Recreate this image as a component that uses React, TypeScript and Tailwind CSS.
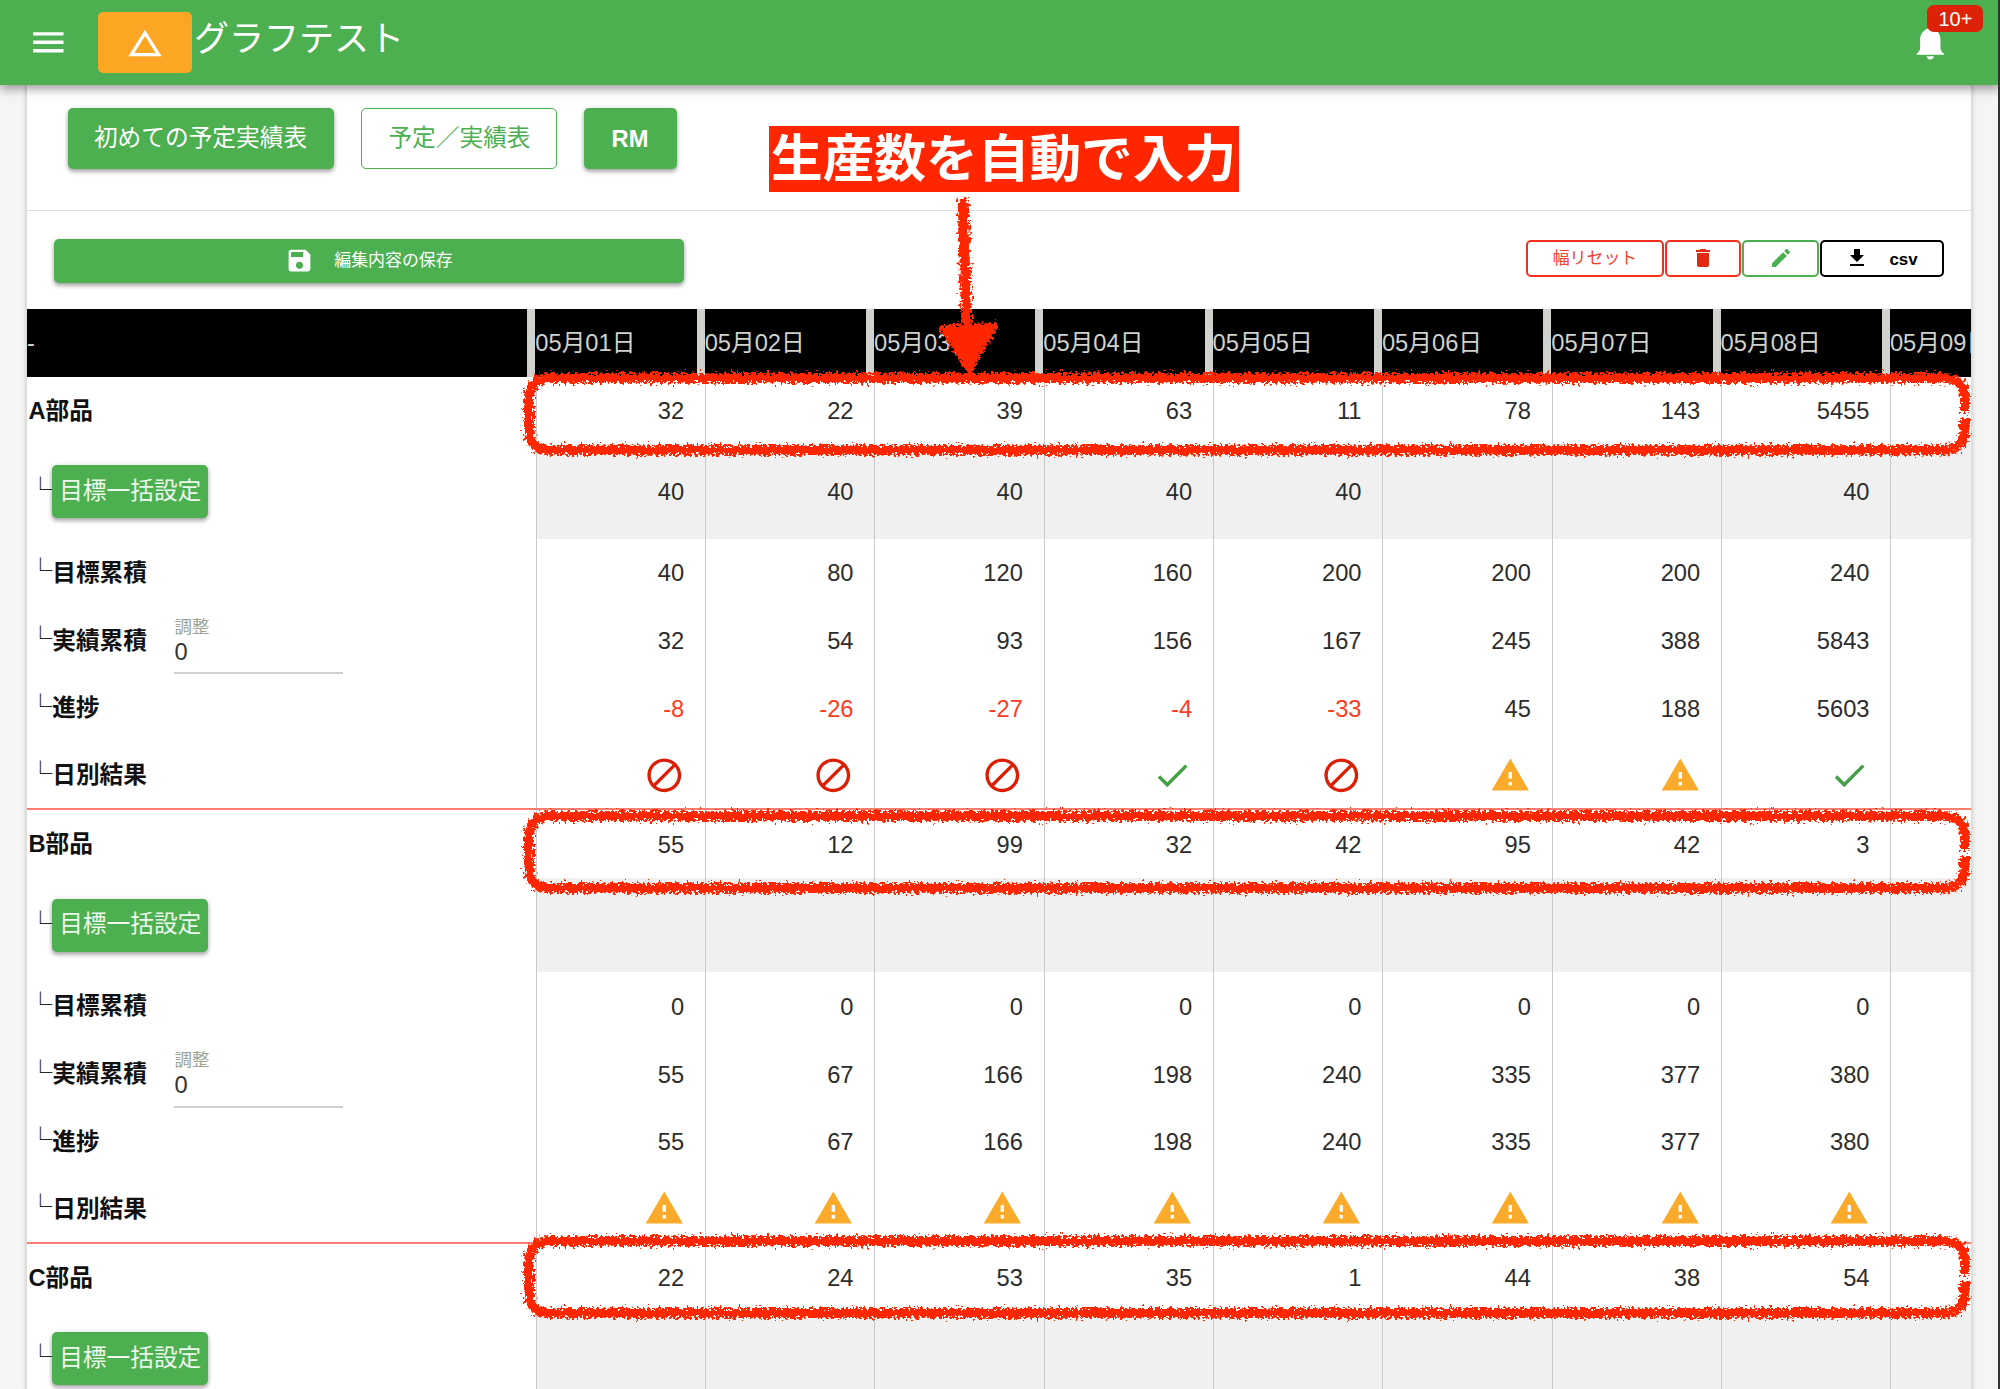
import React from "react";

const MENU = "M3 18h18v-2H3v2zm0-5h18v-2H3v2zm0-7v2h18V6H3z";
const TRIANGLE = "M12 7.77L18.39 18H5.61L12 7.77M12 4L2 20h20L12 4z";
const SAVE =
  "M17 3H5c-1.11 0-2 .9-2 2v14c0 1.1.89 2 2 2h14c1.1 0 2-.9 2-2V7l-4-4zm-5 16c-1.66 0-3-1.34-3-3s1.34-3 3-3 3 1.34 3 3-1.34 3-3 3zm3-10H5V5h10v4z";
const TRASH = "M6 19c0 1.1.9 2 2 2h8c1.1 0 2-.9 2-2V7H6v12zM19 4h-3.5l-1-1h-5l-1 1H5v2h14V4z";
const PENCIL =
  "M3 17.25V21h3.75L17.81 9.94l-3.75-3.75L3 17.25zM20.71 7.04c.39-.39.39-1.02 0-1.41l-2.34-2.34c-.39-.39-1.02-.39-1.41 0l-1.83 1.83 3.75 3.75 1.83-1.83z";
const DOWNLOAD = "M19 9h-4V3H9v6H5l7 7 7-7zM5 18v2h14v-2H5z";
const BAN =
  "M12 2C6.5 2 2 6.5 2 12s4.5 10 10 10 10-4.5 10-10S17.5 2 12 2zM4 12c0-4.4 3.6-8 8-8 1.8 0 3.5.6 4.9 1.7L5.7 16.9C4.6 15.5 4 13.8 4 12zm8 8c-1.8 0-3.5-.6-4.9-1.7L18.3 7.1C19.4 8.5 20 10.2 20 12c0 4.4-3.6 8-8 8z";
const CHECK = "M9 16.17L4.83 12l-1.42 1.41L9 19 21 7l-1.41-1.41z";
const WARN = "M1 21h22L12 2 1 21zm12-3h-2v-2h2v2zm0-4h-2v-4h2v4z";
const BELL =
  "M12 3.6C8.4 4.2 6 6.8 6 10.4V15.4C6 16.8 5.2 17.8 3.9 18.7V19.4H20.1V18.7C18.8 17.8 18 16.8 18 15.4V10.4C18 6.8 15.6 4.2 12 3.6ZM9.9 20.2H14.1C14.1 21.4 13.2 22.1 12 22.1S9.9 21.4 9.9 20.2Z";

function Icon({ d, className }: { d: string; className: string }) {
  return (
    <svg viewBox="0 0 24 24" fill="currentColor" className={className}>
      <path d={d} />
    </svg>
  );
}

type Mark = "ban" | "check" | "warn";

interface Part {
  name: string;
  made: string[];
  target: string[];
  targetSum: string[];
  madeSum: string[];
  progress: string[];
  result: Mark[];
}

const DAYS = ["05月01日", "05月02日", "05月03日", "05月04日", "05月05日", "05月06日", "05月07日", "05月08日", "05月09日"];

const PARTS: Part[] = [
  {
    name: "A部品",
    made: ["32", "22", "39", "63", "11", "78", "143", "5455"],
    target: ["40", "40", "40", "40", "40", "", "", "40"],
    targetSum: ["40", "80", "120", "160", "200", "200", "200", "240"],
    madeSum: ["32", "54", "93", "156", "167", "245", "388", "5843"],
    progress: ["-8", "-26", "-27", "-4", "-33", "45", "188", "5603"],
    result: ["ban", "ban", "ban", "check", "ban", "warn", "warn", "check"],
  },
  {
    name: "B部品",
    made: ["55", "12", "99", "32", "42", "95", "42", "3"],
    target: [],
    targetSum: ["0", "0", "0", "0", "0", "0", "0", "0"],
    madeSum: ["55", "67", "166", "198", "240", "335", "377", "380"],
    progress: ["55", "67", "166", "198", "240", "335", "377", "380"],
    result: ["warn", "warn", "warn", "warn", "warn", "warn", "warn", "warn"],
  },
  {
    name: "C部品",
    made: ["22", "24", "53", "35", "1", "44", "38", "54"],
    target: [],
    targetSum: [],
    madeSum: [],
    progress: [],
    result: [],
  },
];

function ResultMark({ mark }: { mark: Mark }) {
  if (mark === "ban") return <Icon d={BAN} className="size-[40.6px] text-[#dc1f04]" />;
  if (mark === "check") return <Icon d={CHECK} className="size-[40.6px] text-[#43a047]" />;
  return <Icon d={WARN} className="size-[40.6px] text-[#fbab2b]" />;
}

function Row({
  label,
  cells,
  height = "h-[67.73px]",
  shade = "",
  nudge = "pt-[3px]",
}: {
  label: React.ReactNode;
  cells: React.ReactNode[];
  height?: string;
  shade?: string;
  nudge?: string;
}) {
  return (
    <div className={"flex shrink-0 " + height}>
      <div className="flex w-[508.67px] shrink-0 items-center pt-[2px] pl-[1.5px] font-bold text-[#111]">{label}</div>
      {DAYS.map((day, i) => {
        const cell = cells[i] ?? "";
        const negative = typeof cell === "string" && cell.startsWith("-");
        return (
          <div
            key={day}
            className={
              "flex w-[169.33px] shrink-0 items-center justify-end border-l border-[#c8c8c8] pr-[20.8px] " +
              (negative ? "text-[#ff3b22] " : "text-[#2c2c2c] ") +
              nudge +
              " " +
              shade
            }
          >
            {cell}
          </div>
        );
      })}
    </div>
  );
}

function Branch() {
  return <span className="mb-[7px] font-['Noto_Sans_CJK_JP',sans-serif] font-medium text-[#222]">└</span>;
}

function PartRows({ part }: { part: Part }) {
  return (
    <section className="flex shrink-0 flex-col">
      <Row label={part.name} cells={part.made} />
      <Row
        height="h-[94.6px]"
        shade="bg-[#f0f0f0]"
        cells={part.target}
        label={
          <>
            <Branch />
            <button className="-mt-[2px] h-[53px] w-[156px] rounded-[5px] bg-[#4caf50] font-normal text-white/90 shadow-[0_3px_4px_rgba(0,0,0,0.3),0_0_5px_rgba(0,0,0,0.12)]">
              目標一括設定
            </button>
          </>
        }
      />
      <Row label={<><Branch />目標累積</>} cells={part.targetSum} />
      <Row
        cells={part.madeSum}
        label={
          <>
            <Branch />
            実績累積
            <div className="-mt-[2px] ml-[27.5px] flex h-[67.73px] w-[169px] flex-col border-b-2 border-[#cfcfcf] pt-[10px] font-normal">
              <span className="text-[17.5px] leading-[20px] text-[#9ba598]">調整</span>
              <span className="leading-[30px] text-[#333]">0</span>
            </div>
          </>
        }
      />
      <Row label={<><Branch />進捗</>} cells={part.progress} />
      <div className="border-b-2 border-[#ff7d6e]">
        <Row
          height="h-[66.1px]"
          nudge="pt-0"
          label={<><Branch />日別結果</>}
          cells={part.result.map((mark, i) => (
            <ResultMark key={i} mark={mark} />
          ))}
        />
      </div>
    </section>
  );
}

/* Hand-drawn crayon outline around one row of numbers. */
function CrayonFrame({ top }: { top: string }) {
  return (
    <svg
      width="1460"
      height="96"
      viewBox="0 0 1460 96"
      fill="none"
      stroke="#ff2600"
      className={"pointer-events-none absolute left-[517px] " + top}
    >
      <path
        filter="url(#crayon)"
        strokeWidth="10"
        d="M1448 46V34Q1448 12 1426 12H32Q12 12 12 34V62Q12 84 32 84H1426Q1448 84 1448 62V52"
      />
    </svg>
  );
}

export default function App() {
  return (
    <div className="relative flex h-[1389px] w-[2000px] flex-col overflow-hidden bg-[#f5f5f4] font-['Liberation_Sans','Noto_Sans_CJK_JP',sans-serif] text-[23.7px] leading-none">
      <svg width="0" height="0" className="absolute">
        <filter id="crayon" filterUnits="userSpaceOnUse" x="0" y="0" width="1460" height="200">
          <feTurbulence type="fractalNoise" baseFrequency="0.36" numOctaves="2" seed="4" result="noise" />
          <feDisplacementMap in="SourceGraphic" in2="noise" scale="12" xChannelSelector="R" yChannelSelector="G" />
        </filter>
      </svg>

      <header className="relative z-10 flex h-[85px] shrink-0 items-center bg-[#4caf50] pl-[28px] text-white shadow-[0_4px_8px_rgba(0,0,0,0.28),0_6px_12px_rgba(0,0,0,0.1)]">
        <Icon d={MENU} className="size-[40.6px]" />
        <div className="ml-[29px] flex h-[61px] w-[94px] items-center justify-center rounded-[5px] bg-[#fda623]">
          <Icon d={TRIANGLE} className="size-[40px]" />
        </div>
        <h1 className="mb-[8px] ml-[2.5px] text-[35px] font-normal">グラフテスト</h1>
        <div className="relative mr-[49px] ml-auto">
          <Icon d={BELL} className="size-[40.6px]" />
          <span className="absolute -top-[17px] left-[17px] flex h-[27px] w-[56px] items-center justify-center rounded-[7px] bg-[#dc2309] pt-px text-[20px]">
            10+
          </span>
        </div>
      </header>

      <main className="ml-[27px] flex w-[1944px] flex-1 flex-col overflow-hidden bg-white shadow-[0_0_4px_2px_rgba(0,0,0,0.14)]">
        <nav className="flex h-[126px] shrink-0 gap-[27px] border-b-[1.5px] border-[#e0e0e0] pt-[23px] pl-[40.5px]">
          <button className="h-[61px] w-[266px] rounded-[5px] bg-[#4caf50] pt-px text-white shadow-[0_3px_4px_rgba(0,0,0,0.3),0_0_5px_rgba(0,0,0,0.12)]">
            初めての予定実績表
          </button>
          <button className="h-[61px] w-[196px] rounded-[5px] border-[1.7px] border-[#4caf50] pt-px pl-[2px] text-[#4caf50]">
            予定／実績表
          </button>
          <button className="h-[61px] w-[93px] rounded-[5px] bg-[#4caf50] pt-[2px] font-bold text-white shadow-[0_3px_4px_rgba(0,0,0,0.3),0_0_5px_rgba(0,0,0,0.12)]">
            RM
          </button>
        </nav>

        <div className="flex h-[98px] shrink-0 items-start pr-[27px] pl-[27px]">
          <button className="mt-[27.5px] flex h-[44px] w-[630px] items-center justify-center rounded-[5px] bg-[#4caf50] text-[16.93px] text-white shadow-[0_3px_4px_rgba(0,0,0,0.3),0_0_5px_rgba(0,0,0,0.12)]">
            <Icon d={SAVE} className="mr-[20px] size-[29px]" />
            <span className="pt-[2px]">編集内容の保存</span>
          </button>
          <div className="mt-[29px] ml-auto flex gap-px text-[16.93px]">
            <button className="h-[37px] w-[138px] rounded-[5px] border-2 border-[#f5301a] pt-[2px] text-[#f5402c]">幅リセット</button>
            <button className="flex h-[37px] w-[76px] items-center justify-center rounded-[5px] border-2 border-[#f5301a] text-[#e02a12]">
              <Icon d={TRASH} className="mb-[2px] size-[24px]" />
            </button>
            <button className="flex h-[37px] w-[77px] items-center justify-center rounded-[5px] border-2 border-[#4caf50] text-[#4caf50]">
              <Icon d={PENCIL} className="mb-[2px] size-[24px]" />
            </button>
            <button className="flex h-[37px] w-[124px] items-center justify-center rounded-[5px] border-2 border-black pr-px font-bold text-black">
              <Icon d={DOWNLOAD} className="mr-[20px] mb-[2px] size-[24px]" />
              <span className="pt-[3px]">csv</span>
            </button>
          </div>
        </div>

        <div className="flex h-[67.6px] shrink-0 text-[#cfd2cd]">
          <div className="flex w-[508.3px] shrink-0 items-center border-r-8 border-[#cfd2cd] bg-black pt-[2px]">-</div>
          {DAYS.map((day) => (
            <div
              key={day}
              className="flex w-[169.33px] shrink-0 items-center border-r-8 border-[#cfd2cd] bg-black pt-[2px] whitespace-nowrap"
            >
              {day}
            </div>
          ))}
        </div>

        {PARTS.map((part) => (
          <PartRows key={part.name} part={part} />
        ))}
      </main>

      <div className="absolute top-0 right-0 z-20 h-full w-[2px] bg-[#333]" />

      <CrayonFrame top="top-[366px]" />
      <CrayonFrame top="top-[804px]" />
      <CrayonFrame top="top-[1229px]" />

      <svg width="80" height="190" viewBox="0 0 80 190" className="absolute top-[190px] left-[928px]">
        <g filter="url(#crayon)" fill="#ff2600" stroke="#ff2600">
          <path d="M35 9Q37 80 39 140" fill="none" strokeWidth="11" />
          <path d="M14 138L67 136L41 180Z" strokeWidth="6" strokeLinejoin="round" />
        </g>
      </svg>

      <div className="absolute top-[126px] left-[769px] flex h-[66px] w-[470px] items-center bg-[#ff2600] pt-[2px] pl-[2px] text-[51.7px] font-bold whitespace-nowrap text-white">
        生産数を自動で入力
      </div>
    </div>
  );
}
